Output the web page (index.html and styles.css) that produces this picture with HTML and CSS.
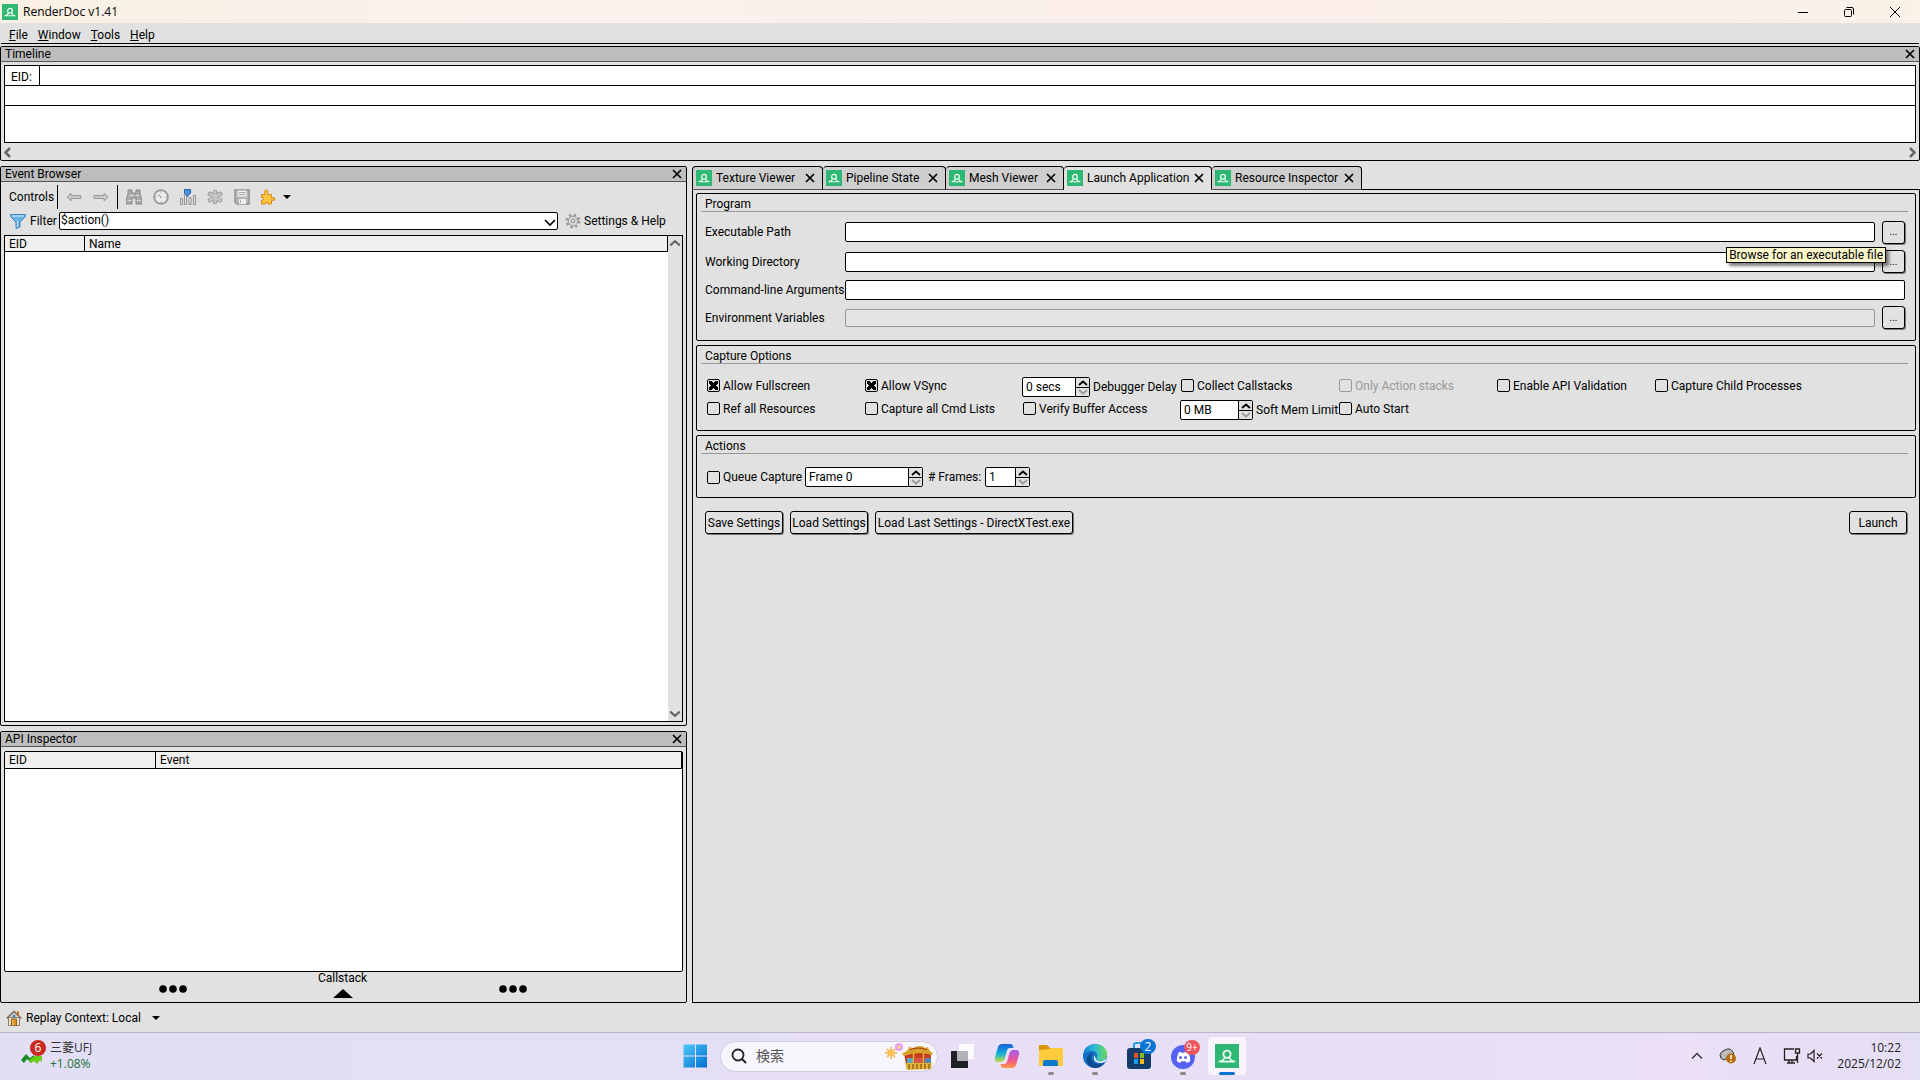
FILE: index.html
```html
<!DOCTYPE html>
<html lang="en">
<head>
<meta charset="utf-8">
<title>RenderDoc v1.41</title>
<link rel="stylesheet" href="styles.css">
</head>
<body>
<svg class="defs" width="0" height="0" aria-hidden="true">
  <symbol id="logo" viewBox="0 0 16 16"><path fill="#2fb873" d="M0 0h16v16H0z"/><circle cx="8" cy="6.800" r="2.400" fill="none" stroke="#eefaf3" stroke-width="1.300"/><path fill="none" stroke="#eefaf3" stroke-width="1.100" d="M2.500 11.700Q5.500 11.500 6.500 9M13.500 11.700Q10.500 11.500 9.500 9M3 11.700h10"/></symbol>
  <symbol id="x" viewBox="0 0 10 10"><path d="M1 1l8 8M9 1L1 9" fill="none" stroke="#000" stroke-width="1.7"/></symbol>
  <symbol id="up" viewBox="0 0 10 6"><path d="M1 5l4-3.500L9 5" fill="none" stroke="currentColor" stroke-width="1.8"/></symbol>
  <symbol id="down" viewBox="0 0 10 6"><path d="M1 1l4 3.500L9 1" fill="none" stroke="currentColor" stroke-width="1.8"/></symbol>
  <symbol id="arrow" viewBox="0 0 16 10"><path d="M1 5l4-4v2.500h10v3H5V9z" fill="#c9c9c9" stroke="#999"/></symbol>
</svg>

<header class="titlebar">
  <svg class="i16"><use href="#logo"/></svg>
  <h1>RenderDoc v1.41</h1>
  <div class="winbtns">
    <button aria-label="Minimize"><svg width="10" height="10"><path d="M0 5.500h10" stroke="#000"/></svg></button>
    <button aria-label="Restore"><svg width="10" height="10" fill="none" stroke="#000"><rect x=".5" y="2.500" width="7" height="7" rx="1"/><path d="M2.500.5H8Q9.500.5 9.500 2v5.500"/></svg></button>
    <button aria-label="Close"><svg width="10" height="10"><path d="M0 0l10 10M10 0L0 10" stroke="#000"/></svg></button>
  </div>
</header>
<nav class="menubar">
  <button><u>F</u>ile</button><button><u>W</u>indow</button><button><u>T</u>ools</button><button><u>H</u>elp</button>
</nav>

<section class="dock">
  <div class="dock-title"><h2>Timeline</h2><button class="close" aria-label="Close Timeline"><svg><use href="#x"/></svg></button></div>
  <div class="timeline">
    <div class="tl-row"><span class="tl-eid">EID:</span></div>
    <div class="tl-row"></div>
    <div class="tl-body"></div>
  </div>
  <div class="hscroll">
    <button aria-label="Scroll left"><svg width="7" height="11"><path d="M6 1L1.500 5.500 6 10" fill="none" stroke="#666" stroke-width="2.500"/></svg></button>
    <button aria-label="Scroll right"><svg width="7" height="11"><path d="M1 1l4.500 4.500L1 10" fill="none" stroke="#666" stroke-width="2.500"/></svg></button>
  </div>
</section>

<main class="work">
  <div class="left">
    <section class="dock events">
      <div class="dock-title"><h2>Event Browser</h2><button class="close" aria-label="Close Event Browser"><svg><use href="#x"/></svg></button></div>
      <div class="toolbar">
        <span class="tb-label">Controls</span><i class="sep"></i>
        <button aria-label="Back"><svg width="16" height="10"><use href="#arrow"/></svg></button>
        <button aria-label="Forward"><svg class="flip" width="16" height="10"><use href="#arrow"/></svg></button>
        <i class="sep"></i>
        <button aria-label="Find"><svg class="i16"><path d="M2 1h4v3h4V1h4v4l2 6v4h-6V9H6v6H0v-4l2-6z" fill="#aaa" stroke="#888"/><path d="M1.500 11.500h4M10.500 11.500h4M3 6.500h3M10 6.500h3M7 5v3" stroke="#ddd" fill="none"/></svg></button>
        <button aria-label="Time"><svg class="i16"><circle cx="8" cy="8" r="6.900" fill="#ececec" stroke="#999" stroke-width="1.800"/><path d="M8.500 9L5.500 5.500M8 2.500v1M8 12.500v1M2.500 8h1M12.500 8h1" stroke="#777" fill="none"/></svg></button>
        <button aria-label="Counters"><svg class="i16"><path d="M.5 9.500h2v6h-2zM4.500 5.500h2v10h-2zM9 8.500h2v7H9zM13.500 6.500h2v9h-2z" fill="#eee" stroke="#8c8c8c"/><path d="M4.500.5h6v3.500L7.500 7.500l-3-3.500z" fill="#4b92dc" stroke="#2060ae"/></svg></button>
        <button aria-label="Bookmark"><svg class="i16"><g stroke="#999" stroke-width="4.600" stroke-linecap="round"><path d="M8 3v10M3 5l10 6M3 11l10-6"/></g><g stroke="#c4c4c4" stroke-width="2.800" stroke-linecap="round"><path d="M8 3v10M3 5l10 6M3 11l10-6"/></g></svg></button>
        <button aria-label="Export"><svg class="i16"><path d="M1 1h14v14H3l-2-2z" fill="#b5b5b5" stroke="#929292" stroke-width="1.500"/><path d="M3.500 1.500h9v6h-9zM5 10h7v5H5z" fill="#eee"/><path d="M4.500 3.500h7M4.500 5.500h7M6.500 11v3" stroke="#aaa"/></svg></button>
        <button class="wide" aria-label="Extensions"><svg class="i16"><path d="M1.500 5.500H5q-1.500-4.500 1.200-4.500t1.300 4.500h4V9q3.500-1.300 3.500 1t-3.500 1.200V15H8q.6-2-1.200-2T5.500 15h-4v-3.800q2 .3 2-1.400t-2-1.300z" fill="#fcc53c" stroke="#d88a1d"/></svg><svg width="8" height="4"><path d="M0 0h8L4 4z"/></svg></button>
      </div>
      <div class="filter">
        <svg class="i16"><path d="M.5 1.500h15v2L10 9v5l-4 1.500V9L.5 3.500z" fill="#69b2e4" stroke="#3f80bd"/><path d="M2 3h12M7.500 8v6" stroke="#cfeaff" fill="none"/></svg>
        <label for="flt">Filter</label>
        <span class="combo"><select id="flt"><option>$action()</option></select><svg width="12" height="8"><path d="M1 1l5 5 5-5" fill="none" stroke="#000" stroke-width="1.700"/></svg></span>
        <button class="settings"><svg class="i16"><circle cx="8" cy="8" r="6.300" fill="none" stroke="#999" stroke-width="2.200" stroke-dasharray="2.500 2.450"/><circle cx="8" cy="8" r="4.800" fill="#d6d6d6" stroke="#999"/><circle cx="8" cy="8" r="1.800" fill="#e4e4e4" stroke="#8d8d8d"/></svg>Settings &amp; Help</button>
      </div>
      <div class="tree">
        <table><thead><tr><th class="c1">EID</th><th>Name</th></tr></thead></table>
        <div class="vscroll"><button aria-label="Scroll up"><svg class="sa"><use href="#up"/></svg></button><button aria-label="Scroll down"><svg class="sa"><use href="#down"/></svg></button></div>
      </div>
    </section>
    <section class="dock api">
      <div class="dock-title"><h2>API Inspector</h2><button class="close" aria-label="Close API Inspector"><svg><use href="#x"/></svg></button></div>
      <div class="tree rounded">
        <table><thead><tr><th class="c2">EID</th><th>Event</th></tr></thead></table>
      </div>
      <button class="callstack">
        <svg width="28" height="8"><circle cx="4" cy="4" r="3.800"/><circle cx="14" cy="4" r="3.800"/><circle cx="24" cy="4" r="3.800"/></svg>
        <span>Callstack<svg width="20" height="9"><path d="M0 9L10 0l10 9z"/></svg></span>
        <svg width="28" height="8"><circle cx="4" cy="4" r="3.800"/><circle cx="14" cy="4" r="3.800"/><circle cx="24" cy="4" r="3.800"/></svg>
      </button>
    </section>
  </div>

  <div class="right">
    <div class="tabs">
      <div class="tab t1"><svg class="i16"><use href="#logo"/></svg><span>Texture Viewer</span><button class="close" aria-label="Close tab"><svg><use href="#x"/></svg></button></div>
      <div class="tab t2"><svg class="i16"><use href="#logo"/></svg><span>Pipeline State</span><button class="close" aria-label="Close tab"><svg><use href="#x"/></svg></button></div>
      <div class="tab t3"><svg class="i16"><use href="#logo"/></svg><span>Mesh Viewer</span><button class="close" aria-label="Close tab"><svg><use href="#x"/></svg></button></div>
      <div class="tab t4 active"><svg class="i16"><use href="#logo"/></svg><span>Launch Application</span><button class="close" aria-label="Close tab"><svg><use href="#x"/></svg></button></div>
      <div class="tab t5"><svg class="i16"><use href="#logo"/></svg><span>Resource Inspector</span><button class="close" aria-label="Close tab"><svg><use href="#x"/></svg></button></div>
      <div class="tabfill"></div>
    </div>
    <div class="page">
      <section class="group program">
        <h3>Program</h3>
        <div class="fields">
          <label for="exe">Executable Path</label><input id="exe" type="text"><span class="browse"><button class="btn" aria-label="Browse executable">...</button><span class="tooltip" role="tooltip">Browse for an executable file</span></span>
          <label for="wd">Working Directory</label><input id="wd" type="text"><button class="btn" aria-label="Browse directory">...</button>
          <label for="cmd">Command-line Arguments</label><input id="cmd" class="full" type="text">
          <label for="env">Environment Variables</label><input id="env" type="text" disabled><button class="btn" aria-label="Edit variables">...</button>
        </div>
      </section>
      <section class="group capture">
        <h3>Capture Options</h3>
        <div class="options">
          <label class="chk"><input type="checkbox" checked>Allow Fullscreen</label>
          <label class="chk"><input type="checkbox" checked>Allow VSync</label>
          <div class="spinrow"><span class="spin s68"><input id="delay" type="text" value="0 secs"><button aria-label="Increase"><svg><use href="#up"/></svg></button><button class="off" aria-label="Decrease"><svg><use href="#down"/></svg></button></span><label for="delay">Debugger Delay</label></div>
          <label class="chk"><input type="checkbox">Collect Callstacks</label>
          <label class="chk dis"><input type="checkbox" disabled>Only Action stacks</label>
          <label class="chk"><input type="checkbox">Enable API Validation</label>
          <label class="chk"><input type="checkbox">Capture Child Processes</label>
          <label class="chk"><input type="checkbox">Ref all Resources</label>
          <label class="chk"><input type="checkbox">Capture all Cmd Lists</label>
          <label class="chk"><input type="checkbox">Verify Buffer Access</label>
          <div class="spinrow"><span class="spin s73"><input id="mem" type="text" value="0 MB"><button aria-label="Increase"><svg><use href="#up"/></svg></button><button class="off" aria-label="Decrease"><svg><use href="#down"/></svg></button></span><label for="mem">Soft Mem Limit</label></div>
          <label class="chk"><input type="checkbox">Auto Start</label>
        </div>
      </section>
      <section class="group actions">
        <h3>Actions</h3>
        <div class="queue">
          <label class="chk"><input type="checkbox">Queue Capture</label>
          <span class="spin s118"><input type="text" value="Frame 0" aria-label="Frame"><button aria-label="Increase"><svg><use href="#up"/></svg></button><button class="off" aria-label="Decrease"><svg><use href="#down"/></svg></button></span>
          <label class="frames" for="nf"># Frames:</label>
          <span class="spin s45"><input id="nf" type="text" value="1"><button aria-label="Increase"><svg><use href="#up"/></svg></button><button class="off" aria-label="Decrease"><svg><use href="#down"/></svg></button></span>
        </div>
      </section>
      <div class="buttons">
        <button class="btn b1">Save Settings</button><button class="btn b1">Load Settings</button><button class="btn b2">Load Last Settings - DirectXTest.exe</button><button class="btn launch">Launch</button>
      </div>
    </div>
  </div>
</main>

<footer class="status">
  <button><svg class="i16"><path d="M2.500 7.500h11v8h-11z" fill="#ecdfc4" stroke="#8d7f70"/><path d="M.7 8.500L8 1.500l7.300 7" fill="none" stroke="#877b6e" stroke-width="1.800"/><path d="M12 1.500v4" stroke="#bf6b20" stroke-width="2"/><path d="M5.500 9h5v6.500h-5z" fill="#d8901f" stroke="#91612a"/><path d="M7 10v5.500" stroke="#f5d28c"/><circle cx="8" cy="6" r="1.500" fill="#4e82bb"/></svg>Replay Context: Local<svg class="dd" width="8" height="4"><path d="M0 0h8L4 4z"/></svg></button>
</footer>

<footer class="taskbar">
  <button class="widget">
    <svg width="26" height="28"><path d="M1 20l5-6 4 4 4-3 1 4-4 4-4-4-3 4z" fill="#188c25"/><path d="M9 20l6-4h7v6l-2-2-3 4-3-3-3 2z" fill="#68ce18"/><circle cx="18" cy="8" r="8" fill="#c92b20"/></svg>
    <b class="badge wbadge">6</b>
    <span class="wtext">三菱UFJ<em>+1.08%</em></span>
  </button>
  <div class="apps">
    <button class="app" aria-label="Start"><svg width="24" height="24"><defs><linearGradient id="w" x1="0" y1="0" x2="24" y2="24" gradientUnits="userSpaceOnUse"><stop stop-color="#4fcbfa"/><stop offset="1" stop-color="#006bd0"/></linearGradient></defs><path fill="url(#w)" d="M.5.5H12v11H.5zM13 .5h11v11H13zM.5 12.500H12v11H.5zM13 12.500h11v11H13z"/></svg></button>
    <label class="search"><svg width="16" height="16"><circle cx="7" cy="7" r="5.500" fill="none" stroke="#222" stroke-width="1.800"/><path d="M11 11l4 4" stroke="#222" stroke-width="2"/></svg><input type="text" value="検索" aria-label="検索">
      <svg width="48" height="28"><g stroke="#f5b03f" stroke-width="1.500"><path d="M6 5v12M0 11h12M2 7l8 8M10 7l-8 8"/></g><circle cx="6" cy="11" r="3.500" fill="#fac05c"/><circle cx="14" cy="5" r="4" fill="#e8a0f2"/><circle cx="14" cy="5" r="1.500" fill="#fae06a"/><path d="M19 11h27l-2 15-22 1z" fill="#b93218"/><path d="M17 11q6-1 7-6l4 1q8-4 12 0l3-1q1 4 5 6l-1 2q-14-4-28 1z" fill="#dca02a"/><path d="M25 8q8-4 17 0" fill="none" stroke="#8c3c18"/><path d="M21 14q13-3 25 0v2H21z" fill="#cb3d20"/><path d="M22 16h6v5h-6z" fill="#56a9c4"/><path d="M30 16h8v5h-8z" fill="#d5574a"/><path d="M40 16h6v5h-6z" fill="#4c86b4"/><path d="M28.500 11v16M38.500 11v16" stroke="#e4b33a" stroke-width="1.500"/><path d="M20 21h27l-1 6-24 1z" fill="#e4b33a"/><path d="M24 22v5M28 22v5M32 22v5M36 22v5M40 22v5M44 22v5" stroke="#6e4118"/></svg></label>
    <button class="app" aria-label="Task view"><svg width="26" height="26"><path d="M9 1h15v15H9z" fill="#fbfbfb"/><path d="M1 8h17v17H1z" fill="#202124"/><path d="M7 8h11v10H7z" fill="#b1b1b6"/></svg></button>
    <button class="app" aria-label="Copilot"><svg width="26" height="26"><defs><linearGradient id="c1" x2="0" y2="1"><stop stop-color="#175fd9"/><stop offset=".55" stop-color="#18b0d7"/><stop offset="1" stop-color="#c8dc3c"/></linearGradient><linearGradient id="c2" x2="0" y2="1"><stop stop-color="#a65bee"/><stop offset=".6" stop-color="#f2578b"/><stop offset="1" stop-color="#ff9a3c"/></linearGradient></defs><path d="M8 1h8q3 0 3.500 4h-4q-2 0-3 4l-2 7q-1 3-4 3H4q-4 0-3-5L4 4q1-3 4-3z" fill="url(#c1)"/><path d="M18 25h-8q-3 0-3.500-4h4q2 0 3-4l2-7q1-3 4-3H22q4 0 3 5l-3 10q-1 3-4 3z" fill="url(#c2)"/></svg></button>
    <button class="app run" aria-label="Explorer"><svg width="26" height="26"><path d="M1 2h8l3 3h12v4H1z" fill="#d99408"/><path d="M1 7l10-1 2-1h12v18H1z" fill="#fecb3c"/><path d="M5 23v-4q0-2 2-2h11q2 0 2 2v4z" fill="#087ac9"/></svg></button>
    <button class="app run" aria-label="Edge"><svg width="26" height="26"><defs><linearGradient id="e1"><stop stop-color="#0a80d5"/><stop offset=".5" stop-color="#31bcd7"/><stop offset="1" stop-color="#6ada50"/></linearGradient></defs><circle cx="13" cy="13" r="12" fill="#126fc4"/><path d="M1 12Q3 1 14 1q11 1 11 11-1 6-8 6-4-1-2-4 1-6-5-6-6 0-9 4z" fill="url(#e1)"/><path d="M11 10q-4 5 1 10 5 3 11-1-3 6-11 6-9-3-7-10 2-5 6-5z" fill="#0c4c94"/><path d="M13 12q-3 4 1 7 4 2 9 0l2-5q-3 5-9 4-3-1-3-6z" fill="#e5f1fa"/></svg></button>
    <button class="app" aria-label="Store"><svg width="28" height="28"><path d="M9 7V3q0-2 2-2h6v6" fill="none" stroke="#23a0e9" stroke-width="2"/><rect x="2" y="6" width="24" height="21" rx="3" fill="#153d6b"/><path d="M9 11h4v5H9z" fill="#f05023"/><path d="M15 11h4v5h-4z" fill="#82bc22"/><path d="M9 17h4v5H9z" fill="#12a3ed"/><path d="M15 17h4v5h-4z" fill="#ffba19"/></svg><b class="badge blue">2</b></button>
    <button class="app run" aria-label="Discord"><svg width="26" height="26"><circle cx="13" cy="14" r="12" fill="#5662f3"/><path d="M7.500 10q2-1 3.500-1.200l.6 1h2.800l.6-1q1.500.2 3.500 1.200 2 4 1.700 8-1.700 1.400-3.700 1.800l-1-1.600h-4l-1 1.600q-2-.4-3.700-1.800-.3-4 1.700-8z" fill="#fff"/><circle cx="10.500" cy="14.500" r="1.500" fill="#5662f3"/><circle cx="15.500" cy="14.500" r="1.500" fill="#5662f3"/></svg><b class="badge red">9+</b></button>
    <button class="app cur" aria-label="RenderDoc"><svg width="24" height="24"><use href="#logo"/></svg></button>
  </div>
  <div class="tray">
    <svg width="12" height="8"><path d="M1 6.500l5-5 5 5" fill="none" stroke="#333" stroke-width="1.400"/></svg>
    <svg width="18" height="16"><path d="M5 12q-4-1-4-5 1-4 5-5 5-3 8 2l1 3z" fill="#bbb" stroke="#333"/><circle cx="12" cy="10.500" r="5" fill="#b76a08"/><path d="M12 7v4M12 12.500v1.500" stroke="#fff" stroke-width="1.500"/></svg>
    <svg width="14" height="18"><path d="M1 17L7 1l6 16M3 12h8" fill="none" stroke="#222" stroke-width="1.200"/></svg>
    <svg width="18" height="18" fill="none" stroke="#222" stroke-width="1.300"><path d="M11 2H1.500v11h12V9M4 16h8M6 13v3M9 13v3M12.500 2h4v4h-4zM14.500 6v10"/></svg>
    <svg width="17" height="14" fill="none" stroke="#222" stroke-width="1.200"><path d="M1 5h2.500L7 1.500v11L3.500 9H1zM10 4.500l5 5M15 4.500l-5 5"/></svg>
    <time>10:22<br>2025/12/02</time>
  </div>
</footer>
</body>
</html>
```
FILE: styles.css
```css
* { box-sizing: border-box; }
body {
  margin: 0; min-height: 100vh; display: flex; flex-direction: column;
  background: #e1e1e1; color: #000;
  font: 12px/14px Roboto, "Noto Sans CJK JP", sans-serif;
}
button, input, select { font: inherit; color: inherit; margin: 0; }
button { padding: 0; border: 0; background: none; }
svg { display: block; flex: none; }
h1, h2, h3 { margin: 0; font: inherit; }
.defs { position: absolute; }
.i16 { width: 16px; height: 16px; }
.flip { transform: scaleX(-1); }

/* window chrome */
.titlebar { display: flex; align-items: center; height: 23px; padding-left: 2px; background: linear-gradient(90deg, #fbf0e3 0, #fbf1ec 25%, #fbeeeb 65%, #faf1e7 100%); }
.titlebar h1 { margin-left: 5px; font-family: "Open Sans", sans-serif; line-height: 18px; }
.winbtns { display: flex; margin: 0 2px 0 auto; }
.winbtns button { width: 46px; height: 21px; display: grid; place-items: center; }
.menubar { display: flex; gap: 10px; height: 21px; margin: 0 1px; padding-left: 8px; border-bottom: 1px solid #000; }
.menubar button { padding-top: 3px; }

/* docks */
.dock { border: 1px solid #000; border-radius: 2px; display: flex; flex-direction: column; }
.dock-title { display: flex; align-items: center; height: 15px; padding-left: 4px; background: #bdbdbd; border-bottom: 1px solid #555; }
.dock-title h2 { line-height: 12px; }
.dock-title .close { margin: 0 4px 0 auto; }
.close svg { width: 10px; height: 10px; }
body > .dock { margin-top: 2px; }
.timeline { margin: 3px 3px 0; border: 1px solid #000; background: #fff; }
.tl-row { display: flex; height: 20px; border-bottom: 1px solid #000; }
.tl-eid { width: 35px; padding: 4px 0 0 6px; border-right: 1px solid #000; }
.tl-body { height: 36px; }
.hscroll { display: flex; justify-content: space-between; align-items: center; height: 17px; padding: 2px 3px 0; }

.work { flex: 1; display: flex; gap: 5px; margin-top: 5px; }
.left { flex: 0 0 687px; display: flex; flex-direction: column; gap: 5px; }
.events { flex: 560; }
.api { flex: 271; }
.toolbar { display: flex; align-items: center; height: 30px; padding-left: 8px; }
.toolbar button { width: 27px; display: flex; justify-content: center; align-items: center; }
.toolbar .wide { width: 36px; gap: 7px; justify-content: flex-start; padding-left: 5px; }
.tb-label { width: 48px; }
.sep { width: 1px; height: 24px; background: #000; }
.sep + button { margin-left: 2px; }
.toolbar button + .sep { margin-left: 3px; }
.filter { display: flex; align-items: center; height: 18px; padding-left: 9px; }
.filter label { width: 33px; padding-left: 4px; }
.combo { display: flex; position: relative; width: 499px; height: 18px; }
.combo select { appearance: none; width: 100%; padding: 0 0 2px 1px; border: 1px solid #000; border-radius: 2px; background: #fff; }
.combo svg { position: absolute; right: 2px; bottom: 3px; }
.settings { display: flex; align-items: center; gap: 3px; margin-left: 7px; }
.tree { flex: 1; display: flex; align-items: flex-start; border: 1px solid #000; background: #fff; }
.events .tree { margin: 5px 3px 3px; }
.tree table { flex: 1; border-collapse: separate; border-spacing: 0; }
.tree th { height: 16px; padding: 0 0 0 4px; font-weight: normal; text-align: left; background: #efefef; border-right: 1px solid #000; border-bottom: 1px solid #000; }
.tree .c1 { width: 80px; }
.tree .c2 { width: 151px; }
.vscroll { align-self: stretch; width: 14px; display: flex; flex-direction: column; justify-content: space-between; align-items: center; padding: 3px 0; background: #e1e1e1; color: #666; }
.sa { width: 12px; height: 8px; }
.rounded { margin: 4px 3px 0; border-radius: 2px; }
.rounded th { height: 17px; }
.callstack { display: grid; grid-template-columns: 28px 312px 28px; justify-content: center; height: 30px; align-items: center; padding: 0 4px 0 2px; }
.callstack span { display: grid; justify-items: center; gap: 4px; padding-bottom: 4px; line-height: 13px; }
.callstack > svg { margin-top: 4px; }

/* right-hand pages */
.right { flex: 1; display: flex; flex-direction: column; }
.tabs { display: flex; height: 24px; }
.tab { display: flex; align-items: center; padding: 0 7px 0 3px; background: #cfcfcf; border: 1px solid #000; border-bottom-color: #555; border-left-width: 0; border-radius: 4px 4px 0 0; }
.tab span { margin-left: 4px; }
.tab .close { margin-left: auto; }
.t1 { width: 131px; border-left-width: 1px; }
.t2 { width: 123px; }
.t3 { width: 118px; }
.t4 { width: 148px; }
.t5 { width: 150px; }
.tab.active { background: #e1e1e1; border-bottom-color: #e1e1e1; }
.tabfill { flex: 1; border-bottom: 1px solid #000; }
.page { flex: 1; padding: 3px 3px 0; border: 1px solid #000; border-top: 0; }
.group { border: 1px solid #000; border-radius: 2px; margin-bottom: 4px; padding: 0 7px 0 4px; }
.group h3 { height: 18px; padding: 3px 4px 0; border-bottom: 1px solid #999; }
.program { height: 148px; }
.capture { height: 86px; }
.actions { height: 63px; }
.fields { display: grid; grid-template-columns: 140px minmax(0, 1fr) 23px; grid-template-rows: 30px 29px 27px 29px; align-items: center; margin: 5px 3px 0 4px; }
.fields input { height: 20px; margin-right: 7px; padding: 0 3px; border: 1px solid #000; border-radius: 2px; background: #fff; min-width: 0; }
.fields .full { grid-column: 2 / 4; margin-right: 0; }
.fields input:disabled { height: 18px; border-color: #999; background: #e4e4e4; }
.btn { height: 23px; border: 1px solid #000; border-radius: 3px; background: #e1e1e1; box-shadow: 1px 1px 0 #777; white-space: nowrap; }
.fields .btn { width: 23px; font-size: 10px; }
.browse { position: relative; display: flex; }
.tooltip { position: absolute; right: 19px; top: 26px; z-index: 2; padding: 0 2px; border: 1px solid #000; background: #fbf7cb; box-shadow: 3px 3px 3px rgba(0, 0, 0, .5); white-space: nowrap; }
.options { display: grid; grid-template-columns: repeat(7, 158px); grid-auto-rows: 23px; margin: 10px 0 0 6px; align-items: center; }
.chk { display: flex; align-items: center; gap: 3px; white-space: nowrap; }
.chk input { appearance: none; flex: none; width: 13px; height: 13px; border: 1px solid #000; border-radius: 2px; background: #e1e1e1; }
.chk input:checked { background: linear-gradient(45deg, transparent 38%, #000 38%, #000 62%, transparent 62%) 1px 1px / 9px 9px no-repeat, linear-gradient(-45deg, transparent 38%, #000 38%, #000 62%, transparent 62%) 1px 1px / 9px 9px no-repeat, #e1e1e1; }
.dis { color: #999; }
.dis input { border-color: #999; }
.spinrow { display: flex; align-items: center; gap: 3px; white-space: nowrap; margin-left: -1px; padding-top: 3px; }
.spin { display: grid; grid-template: 9px 9px / minmax(0, 1fr) 13px; border: 1px solid #000; border-radius: 2px; background: #fff; }
.spin input { grid-row: 1 / 3; min-width: 0; padding: 0 0 0 3px; border: 0; border-right: 1px solid #000; background: none; }
.spin button { background: #e1e1e1; display: grid; place-items: center; }
.spin .off { border-top: 1px solid #000; color: #999; }
.spin button svg { width: 10px; height: 6px; }
.s68 { width: 68px; }
.s73 { width: 73px; }
.s118 { width: 118px; }
.s45 { width: 45px; }
.queue { display: flex; align-items: center; margin: 13px 0 0 6px; }
.queue .chk { width: 98px; }
.frames { width: 62px; padding-left: 5px; }
.buttons { display: flex; gap: 7px; margin: 13px 9px 0; }
.b1 { width: 78px; }
.b2 { width: 198px; }
.launch { width: 58px; margin-left: auto; }

.status { display: flex; height: 29px; padding-left: 6px; }
.status button { display: flex; align-items: center; gap: 4px; }
.status .dd { margin-left: 7px; }

/* taskbar */
.taskbar { display: grid; grid-template-columns: 1fr auto 1fr; align-items: center; height: 48px; padding-bottom: 1px; border-top: 1px solid #b7b4c4; background: linear-gradient(90deg, #e2def5, #e6dff5 50%, #ebe0f5 88%, #e4def6); font-family: "Open Sans", "Noto Sans CJK JP", sans-serif; }
.widget { position: relative; display: flex; gap: 4px; justify-self: start; padding-left: 20px; text-align: left; color: #333; }
.wtext { line-height: 16px; }
.wtext em { display: block; font-style: normal; color: #26733a; }
.badge { position: absolute; font-weight: normal; text-align: center; color: #fff; border-radius: 8px; line-height: 15px; }
.wbadge { left: 30px; top: 0; width: 16px; }
.apps { display: flex; align-items: center; padding-left: 2px; }
.app { position: relative; width: 38px; height: 38px; margin: 0 3px; display: grid; place-items: center; border-radius: 4px; }
.run::after, .cur::after { content: ""; position: absolute; bottom: 0; left: 16px; width: 6px; height: 3px; border-radius: 2px; background: #888; }
.cur::after { left: 11px; width: 16px; background: #0873cf; }
.cur { background: #f7f4fc; }
.blue { top: 2px; right: 2px; width: 16px; background: #0874d4; }
.red { top: 3px; right: 2px; width: 16px; background: #ee555c; font-size: 10px; }
.search { display: flex; align-items: center; width: 218px; height: 31px; margin: 0 3px; padding: 0 4px 0 10px; border: 1px solid #d2cce0; border-radius: 16px; background: #f8f6fd; }
.search input { flex: 1; min-width: 0; padding: 0 0 0 9px; border: 0; background: none; color: #555; font-size: 14px; line-height: 20px; }
.tray { display: flex; align-items: center; justify-self: end; padding-right: 19px; color: #222; }
.tray svg { margin-right: 16px; }
.tray svg:nth-of-type(4) { margin-right: 6px; }
.tray svg:nth-of-type(5) { margin-right: 13px; }
.tray time { line-height: 16px; text-align: right; }
```
